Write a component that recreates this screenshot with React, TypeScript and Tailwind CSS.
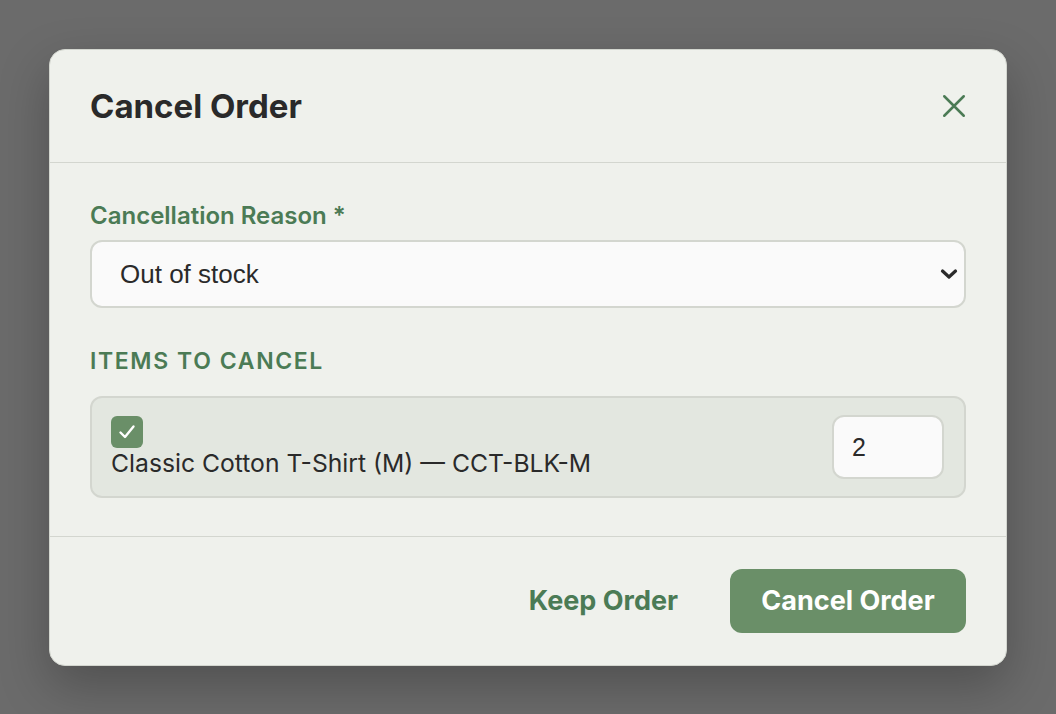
import { useState } from "react";

export default function App() {
  const [reason, setReason] = useState("out_of_stock");
  const [checked, setChecked] = useState(true);
  const [qty, setQty] = useState("2");

  return (
    <div
      className="min-h-[714px] bg-[#6b6b6b] flex items-start justify-center pt-[49px]"
      style={{ fontFamily: "Inter, 'Noto Sans', sans-serif" }}
    >
      <div className="w-[958px] rounded-[16px] border border-[#d3d6cf] bg-[#eff1ec] shadow-[0_20px_50px_rgba(0,0,0,0.25)]">
        {/* header */}
        <div className="flex items-center justify-between px-[40px] py-[40px] border-b-[1.5px] border-[#d3d6cf]">
          <h1 className="text-[33px] leading-[32px] font-bold text-[#2a2a2a]">Cancel Order</h1>
          <button className="text-[#4b7b55] -mr-[1px]">
            <svg width="26" height="26" viewBox="0 0 24 24" fill="none" stroke="currentColor" strokeWidth="2.3" strokeLinecap="round">
              <path d="M3 3L21 21M21 3L3 21" />
            </svg>
          </button>
        </div>

        {/* body */}
        <div className="px-[40px] pt-[40px] pb-[38px] border-b-[1.5px] border-[#d3d6cf]">
          <label className="block text-[24px] leading-[26px] font-semibold text-[#4b7b55]">
            Cancellation Reason *
          </label>
          <div className="relative mt-[11px]">
            <select
              value={reason}
              onChange={(e) => setReason(e.target.value)}
              className="block w-full h-[68px] appearance-none rounded-[12px] border-2 border-[#d3d6cf] bg-[#fafafa] pl-[28px] text-[26px] text-[#2a2a2a] outline-none"
              style={{ fontFamily: "'Liberation Sans', Arial, sans-serif" }}
            >
              <option value="out_of_stock">Out of stock</option>
              <option value="customer_request">Customer request</option>
              <option value="fraud">Suspected fraud</option>
            </select>
            <svg
              className="absolute right-[8px] top-1/2 -translate-y-1/2 pointer-events-none text-[#2a2a2a]"
              width="18"
              height="12"
              viewBox="0 0 18 12"
              fill="none"
              stroke="currentColor"
              strokeWidth="3.2"
              strokeLinecap="round"
              strokeLinejoin="round"
            >
              <path d="M2.5 3L9 9L15.5 3" />
            </svg>
          </div>

          <h2 className="mt-[40px] text-[23px] leading-[26px] font-semibold uppercase tracking-[0.07em] text-[#4b7b55]">
            Items to Cancel
          </h2>

          <div className="mt-[22px] flex items-center justify-between rounded-[12px] border-2 border-[#d3d6cf] bg-[#e3e7e0] pl-[19px] pr-[20px] py-[17px]">
            <div className="flex flex-col items-start">
              <button
                onClick={() => setChecked(!checked)}
                className={`w-[32px] h-[32px] rounded-[6px] flex items-center justify-center ${checked ? "bg-[#6a8f68]" : "bg-white border border-[#c6cbc2]"}`}
              >
                {checked && (
                  <svg width="18" height="16" viewBox="0 0 18 16" fill="none" stroke="white" strokeWidth="2.4" strokeLinecap="round" strokeLinejoin="round">
                    <path d="M2.5 8.5L7 13L15.5 2.5" />
                  </svg>
                )}
              </button>
              <span className="text-[24.7px] leading-[30px] text-[#2a2a2a]">
                Classic Cotton T-Shirt (M) — CCT-BLK-M
              </span>
            </div>
            <input
              value={qty}
              onChange={(e) => setQty(e.target.value)}
              className="w-[112px] h-[64px] rounded-[12px] border-2 border-[#d3d6cf] bg-[#fafafa] px-[18px] text-[25px] text-[#2a2a2a] outline-none"
              style={{ fontFamily: "'Liberation Sans', Arial, sans-serif" }}
            />
          </div>
        </div>

        {/* footer */}
        <div className="flex items-center justify-end gap-[28px] px-[40px] py-[32px]">
          <button className="px-[24px] h-[64px] text-[27px] font-bold text-[#4b7b55]">Keep Order</button>
          <button className="w-[236px] h-[64px] rounded-[12px] bg-[#6a8f68] text-[27px] font-bold text-white">
            Cancel Order
          </button>
        </div>
      </div>
    </div>
  );
}
